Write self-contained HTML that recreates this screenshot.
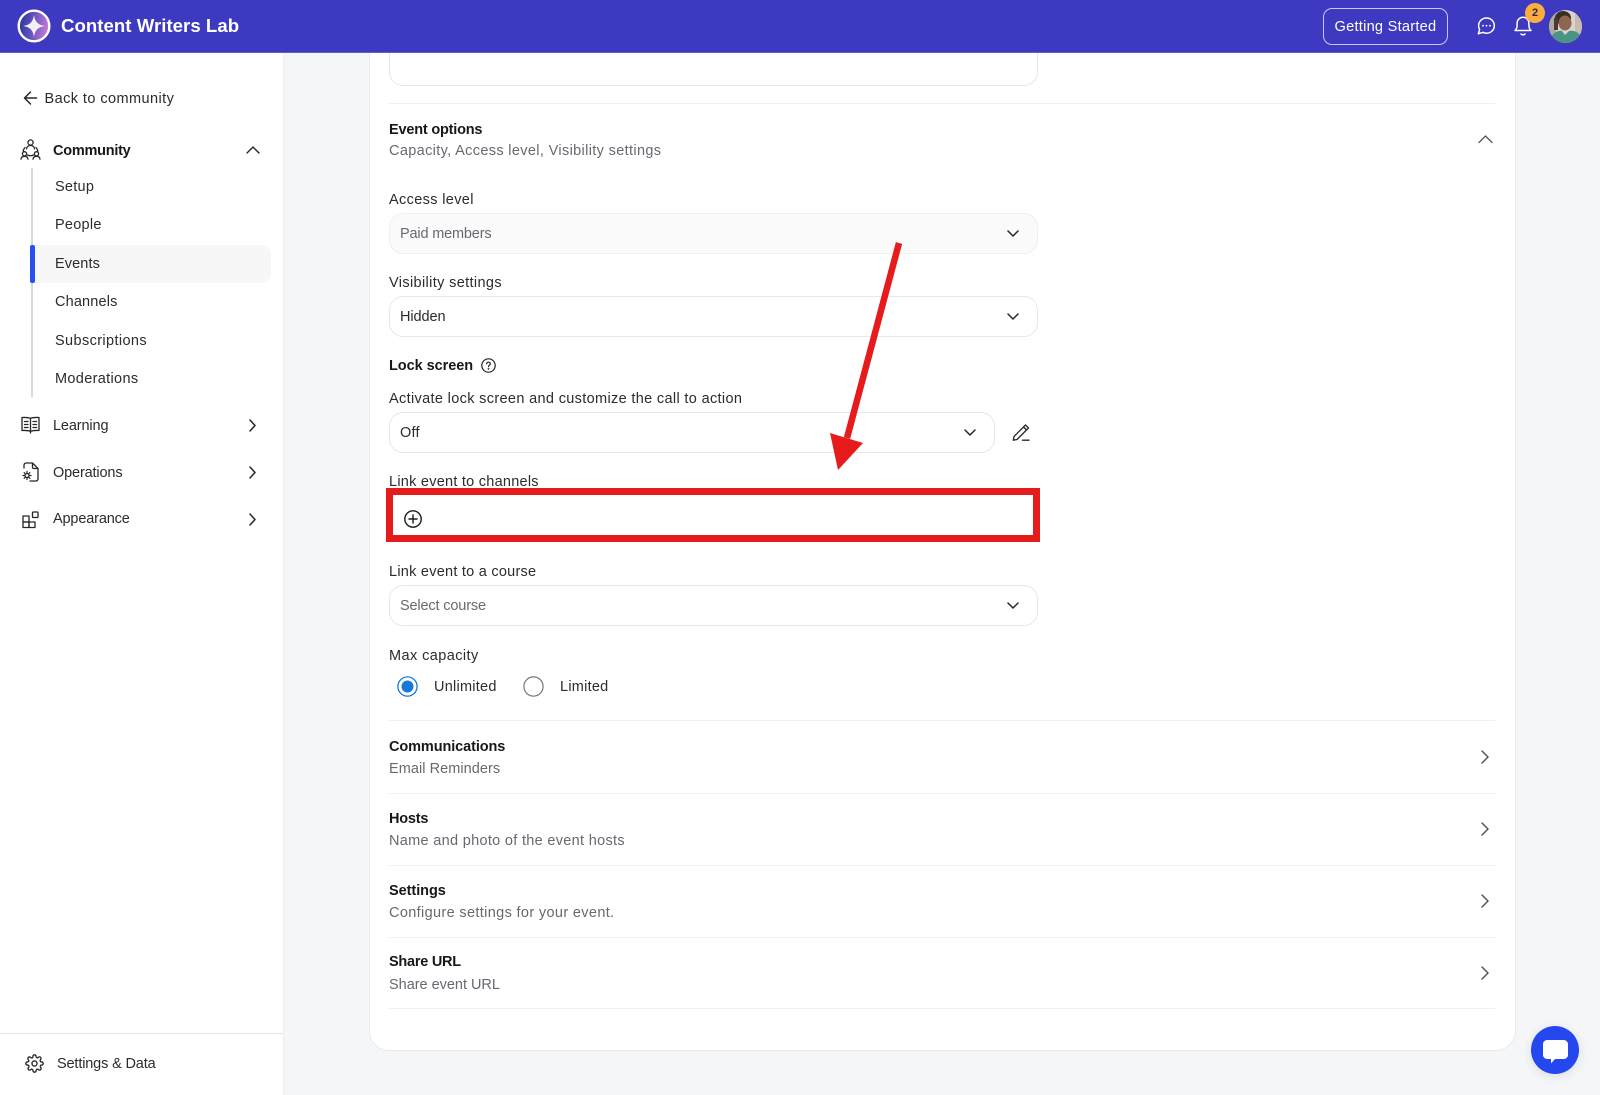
<!DOCTYPE html>
<html lang="en"><head><meta charset="utf-8"><title>Content Writers Lab</title>
<style>
*{box-sizing:border-box}
html,body{margin:0;padding:0;width:1600px;height:1095px;overflow:hidden;background:#f5f6f8;font-family:"Liberation Sans",sans-serif;color:#1f1f24}
.t{position:absolute;white-space:nowrap;transform:translateY(calc(-50% + 1px));font-size:14.5px;line-height:20px;letter-spacing:.25px}
.b{font-weight:700;color:#17171c}
.g{color:#666a70}
.l{color:#2b2b30}
.box{position:absolute;background:#fff;border:1px solid #e6e7ea}
.sel{left:389px;width:649px;border-radius:14px}
.hr{position:absolute;left:389px;width:1106px;height:1px;background:#eeeff1}
svg{position:absolute;overflow:visible}
.ic{fill:none;stroke:#26262b;stroke-width:1.5;stroke-linecap:round;stroke-linejoin:round}
</style></head><body>

<!-- card -->
<div style="position:absolute;left:368.500px;top:20px;width:1147px;height:1031px;background:#fff;border:1px solid #e9eaed;border-radius:20px"></div>
<div class="box" style="left:389px;top:20px;width:649px;height:66px;border-radius:0 0 14px 14px;border-top:none"></div>
<div class="hr" style="top:103px"></div>
<div class="t b" style="left:389px;top:129px;letter-spacing:-.2px">Event options</div>
<div class="t g" style="left:389px;top:149.500px;letter-spacing:.35px">Capacity, Access level, Visibility settings</div>
<svg class="ic" style="left:1478px;top:135px;stroke:#55565a;stroke-width:1.300" width="15" height="8" viewBox="0 0 15 8"><path d="M1 7.500 7.500 1 14 7.500"/></svg>

<div class="t l" style="left:389px;top:199px;letter-spacing:.35px">Access level</div>
<div class="box sel" style="top:213px;height:41px;background:#fafafa;border-color:#eeeff1"></div>
<div class="t g" style="left:400px;top:233px;letter-spacing:-.17px">Paid members</div>
<svg class="ic" style="left:1006.500px;top:229.500px" width="12" height="7" viewBox="0 0 12 7"><path d="M1 1 6 6 11 1"/></svg>

<div class="t l" style="left:389px;top:281.500px;letter-spacing:.36px">Visibility settings</div>
<div class="box sel" style="top:296px;height:41px"></div>
<div class="t l" style="left:400px;top:316px;letter-spacing:-.08px">Hidden</div>
<svg class="ic" style="left:1006.500px;top:312.500px" width="12" height="7" viewBox="0 0 12 7"><path d="M1 1 6 6 11 1"/></svg>

<div class="t b" style="left:389px;top:364.500px;letter-spacing:-.05px">Lock screen</div>
<svg class="ic" style="left:481px;top:358px;stroke-width:1.200" width="15" height="15" viewBox="0 0 15 15"><circle cx="7.500" cy="7.500" r="6.700"/><path d="M5.600 5.800C5.800 4.700 6.600 4.200 7.500 4.200 8.600 4.200 9.400 4.900 9.400 5.800 9.400 7.100 7.500 7.200 7.500 8.600"/><circle cx="7.500" cy="10.800" r=".35"/></svg>
<div class="t l" style="left:389px;top:397.500px;letter-spacing:.34px">Activate lock screen and customize the call to action</div>
<div class="box" style="left:389px;top:412px;width:606px;height:41px;border-radius:14px"></div>
<div class="t l" style="left:400px;top:431.500px">Off</div>
<svg class="ic" style="left:964px;top:429px" width="12" height="7" viewBox="0 0 12 7"><path d="M1 1 6 6 11 1"/></svg>
<svg class="ic" style="left:1012px;top:424px;stroke-width:1.300" width="18" height="17" viewBox="0 0 18 17"><path d="M13.500 1 16.500 4 5 15.500 1.300 16.200 2 12.500ZM11.500 3 14.500 6M10.500 16.200H17"/></svg>

<div class="t l" style="left:389px;top:481px">Link event to channels</div>
<div style="position:absolute;left:386px;top:488px;width:654px;height:54px;border:7px solid #e61b1b;background:#fff"></div>
<svg class="ic" style="left:404px;top:509.500px;stroke:#1b1b20;stroke-width:1.400" width="18" height="18" viewBox="0 0 18 18"><circle cx="9" cy="9" r="8.200"/><path d="M9 5V13M5 9H13"/></svg>

<div class="t l" style="left:389px;top:571px">Link event to a course</div>
<div class="box sel" style="top:585px;height:41px"></div>
<div class="t g" style="left:400px;top:605px;letter-spacing:-.15px">Select course</div>
<svg class="ic" style="left:1006.500px;top:601.500px" width="12" height="7" viewBox="0 0 12 7"><path d="M1 1 6 6 11 1"/></svg>

<div class="t l" style="left:389px;top:654.500px;letter-spacing:.42px">Max capacity</div>
<svg style="left:397px;top:675.500px" width="21" height="21" viewBox="0 0 21 21"><circle cx="10.500" cy="10.500" r="9.600" fill="#fff" stroke="#1678d8" stroke-width="1.300"/><circle cx="10.500" cy="10.500" r="6" fill="#1678d8"/></svg>
<div class="t l" style="left:434px;top:686px">Unlimited</div>
<svg style="left:522.500px;top:675.500px" width="21" height="21" viewBox="0 0 21 21"><circle cx="10.500" cy="10.500" r="9.600" fill="#fff" stroke="#77787c" stroke-width="1.200"/></svg>
<div class="t l" style="left:560px;top:686px">Limited</div>

<div class="hr" style="top:720px"></div>
<div class="t b" style="left:389px;top:746px;letter-spacing:-.1px">Communications</div>
<div class="t g" style="left:389px;top:768px;letter-spacing:.05px">Email Reminders</div>
<svg class="ic" style="left:1481px;top:750px;stroke:#55565a" width="8" height="14" viewBox="0 0 8 14"><path d="M1 1 7 7 1 13"/></svg>
<div class="hr" style="top:793px"></div>
<div class="t b" style="left:389px;top:817.500px;letter-spacing:-.2px">Hosts</div>
<div class="t g" style="left:389px;top:840px;letter-spacing:.31px">Name and photo of the event hosts</div>
<svg class="ic" style="left:1481px;top:822px;stroke:#55565a" width="8" height="14" viewBox="0 0 8 14"><path d="M1 1 7 7 1 13"/></svg>
<div class="hr" style="top:864.500px"></div>
<div class="t b" style="left:389px;top:889.500px;letter-spacing:-.05px">Settings</div>
<div class="t g" style="left:389px;top:912px;letter-spacing:.35px">Configure settings for your event.</div>
<svg class="ic" style="left:1481px;top:894px;stroke:#55565a" width="8" height="14" viewBox="0 0 8 14"><path d="M1 1 7 7 1 13"/></svg>
<div class="hr" style="top:937px"></div>
<div class="t b" style="left:389px;top:961px;letter-spacing:-.25px">Share URL</div>
<div class="t g" style="left:389px;top:983.500px;letter-spacing:-.02px">Share event URL</div>
<svg class="ic" style="left:1481px;top:966px;stroke:#55565a" width="8" height="14" viewBox="0 0 8 14"><path d="M1 1 7 7 1 13"/></svg>
<div class="hr" style="top:1008px"></div>

<!-- top bar -->
<div style="position:absolute;left:0;top:0;width:1600px;height:53px;background:#3d39c0;border-bottom:1px solid #5f5cd0"></div>
<svg style="left:17px;top:9px" width="34" height="34" viewBox="0 0 34 34">
<defs><linearGradient id="lg" x1="0" y1="0" x2="1" y2="0.2"><stop offset="0" stop-color="#22308f"/><stop offset=".5" stop-color="#5f52c0"/><stop offset="1" stop-color="#c477d6"/></linearGradient></defs>
<circle cx="17" cy="17" r="15.300" fill="url(#lg)" stroke="#fff" stroke-width="2.400"/>
<path d="M17 6C18 13 21 16 28 17 21 18 18 21 17 28 16 21 13 18 6 17 13 16 16 13 17 6Z" fill="#f4f0fb"/>
</svg>
<div class="t" style="left:61px;top:25px;font-size:18.600px;font-weight:700;color:#fff;letter-spacing:.04px">Content Writers Lab</div>
<div style="position:absolute;left:1323px;top:8px;width:125px;height:37px;border:1px solid #c9c8f0;border-radius:9px"></div>
<div class="t" style="left:1334.500px;top:25.500px;font-size:14.600px;color:#fff;letter-spacing:.25px">Getting Started</div>
<svg style="left:1477px;top:17px" width="18" height="18" viewBox="0 0 18 18"><path d="M9.500 1C14 1 17.300 4.400 17.300 8.600 17.300 12.900 13.900 16.200 9.600 16.200 8.300 16.200 7.100 15.900 6 15.300L1.300 16.800 2.600 12.600C2 11.400 1.600 10.100 1.600 8.700 1.600 4.400 5 1 9.500 1Z" fill="none" stroke="#fff" stroke-width="1.500" stroke-linejoin="round"/><circle cx="6" cy="8.700" r=".9" fill="#fff"/><circle cx="9.500" cy="8.700" r=".9" fill="#fff"/><circle cx="13" cy="8.700" r=".9" fill="#fff"/></svg>
<svg style="left:1514px;top:16px" width="18" height="20" viewBox="0 0 18 20"><path d="M1 14.500C2.600 13 3.100 11.800 3.100 9.500V7.500C3.100 4 5.700 1.200 9 1.200S14.900 4 14.900 7.500V9.500C14.900 11.800 15.400 13 17 14.500Z" fill="none" stroke="#fff" stroke-width="1.500" stroke-linejoin="round"/><path d="M7 18C8 19.100 10 19.100 11 18" fill="none" stroke="#fff" stroke-width="1.500" stroke-linecap="round"/></svg>
<div style="position:absolute;left:1525px;top:2.500px;width:20px;height:20px;border-radius:50%;background:#fbae3f"></div>
<div class="t" style="left:1532px;top:12px;font-size:11px;font-weight:700;color:#2a2a35;letter-spacing:0">2</div>
<svg style="left:1549px;top:10px" width="33" height="33" viewBox="0 0 33 33">
<defs><clipPath id="av"><circle cx="16.500" cy="16.500" r="16.500"/></clipPath></defs>
<g clip-path="url(#av)"><rect width="33" height="33" fill="#d8d4cf"/><rect width="7" height="33" fill="#b0a99f"/><rect x="26" width="7" height="33" fill="#c9bbae"/>
<ellipse cx="14" cy="8" rx="8" ry="7" fill="#3a2c26"/><rect x="5" y="8" width="4" height="12" fill="#4a3a32"/>
<ellipse cx="16" cy="13" rx="6.500" ry="7.500" fill="#8f6450"/>
<path d="M2 33V27C5 22 10 20 13 21L16 25 20 21C25 20 30 22 33 28V33Z" fill="#4a9484"/></g></svg>

<!-- sidebar -->
<div style="position:absolute;left:0;top:53px;width:284px;height:1042px;background:#fff;border-right:1px solid #eceef0"></div>
<svg class="ic" style="left:23px;top:90px" width="15" height="16" viewBox="0 0 15 16"><path d="M13.500 8H1.500M7.500 2 1.500 8 7.500 14"/></svg>
<div class="t l" style="left:44.500px;top:97.500px;letter-spacing:.43px">Back to community</div>
<svg class="ic" style="left:20px;top:139px;stroke-width:1.300" width="21" height="21" viewBox="0 0 21 21"><circle cx="10.500" cy="3.500" r="2.600"/><path d="M6.500 9.800C6.900 7.600 8.500 6.500 10.500 6.500S14.100 7.600 14.500 9.800M5 8.500C3.700 10 3.200 11 3.200 12.300M16 8.500C17.300 10 17.800 11 17.800 12.300M7.500 16C9.500 17 11.500 17 13.500 16"/><circle cx="4.500" cy="14.800" r="2.100"/><circle cx="16.500" cy="14.800" r="2.100"/><path d="M1 20.200C1.200 18 2.700 17.300 4.500 17.300S7.800 18 8 20.200M13 20.200C13.200 18 14.700 17.300 16.500 17.300S19.800 18 20 20.200"/></svg>
<div class="t b" style="left:53px;top:149.500px;letter-spacing:-.25px">Community</div>
<svg class="ic" style="left:246px;top:146px;stroke-width:1.400" width="14" height="8" viewBox="0 0 14 8"><path d="M1 7 7 1 13 7"/></svg>
<div style="position:absolute;left:31px;top:168px;width:2px;height:229px;background:#d9d9dc"></div>
<div style="position:absolute;left:30px;top:245px;width:241px;height:38px;background:#f7f7f8;border-radius:0 10px 10px 0"></div>
<div style="position:absolute;left:30px;top:245px;width:5px;height:38px;background:#2750ee;border-radius:2px"></div>
<div class="t l" style="left:55px;top:186px">Setup</div>
<div class="t l" style="left:55px;top:224px">People</div>
<div class="t l" style="left:55px;top:263px;letter-spacing:.1px">Events</div>
<div class="t l" style="left:55px;top:300.500px;letter-spacing:.15px">Channels</div>
<div class="t l" style="left:55px;top:339.500px;letter-spacing:.38px">Subscriptions</div>
<div class="t l" style="left:55px;top:377.500px;letter-spacing:.33px">Moderations</div>

<svg class="ic" style="left:21px;top:416px;stroke-width:1.300" width="19" height="18" viewBox="0 0 19 18"><path d="M9.500 2.500C8 1.500 5 1.300 1 1.500V14.500C5 14.300 8 14.500 9.500 15.500 11 14.500 14 14.300 18 14.500V1.500C14 1.300 11 1.500 9.500 2.500ZM9.500 2.500V17M3.500 5.500H7M3.500 8.500H7M3.500 11.500H7M12 5.500H15.500M12 8.500H15.500M12 11.500H15.500"/></svg>
<div class="t l" style="left:53px;top:425px;letter-spacing:-.13px">Learning</div>
<svg class="ic" style="left:249px;top:419px;stroke-width:1.500" width="7" height="13" viewBox="0 0 7 13"><path d="M1 1 6 6.500 1 12"/></svg>
<svg class="ic" style="left:22px;top:462px;stroke-width:1.300" width="17" height="20" viewBox="0 0 17 20"><path d="M2 6V3C2 2 3 1 4 1H10.500L16 6.500V17C16 18 15 19 14 19H8M10.500 1V5.500C10.500 6 11 6.500 11.500 6.500H16"/><circle cx="5" cy="13.500" r="2"/><path d="M5 9.500V10.500M5 16.500V17.500M1 13.500H2M8 13.500H9M2.200 10.700 2.900 11.400M7.100 15.600 7.800 16.300M2.200 16.300 2.900 15.600M7.100 11.400 7.800 10.700"/></svg>
<div class="t l" style="left:53px;top:472px;letter-spacing:-.15px">Operations</div>
<svg class="ic" style="left:249px;top:466px;stroke-width:1.500" width="7" height="13" viewBox="0 0 7 13"><path d="M1 1 6 6.500 1 12"/></svg>
<svg class="ic" style="left:22px;top:511px;stroke-width:1.300" width="17" height="17" viewBox="0 0 17 17"><rect x="1" y="5" width="6" height="6"/><rect x="1" y="11" width="6" height="5.500"/><rect x="7" y="11" width="6" height="5.500"/><rect x="10.500" y="1" width="5.500" height="5.500" rx=".8"/></svg>
<div class="t l" style="left:53px;top:518px;letter-spacing:-.15px">Appearance</div>
<svg class="ic" style="left:249px;top:512.500px;stroke-width:1.500" width="7" height="13" viewBox="0 0 7 13"><path d="M1 1 6 6.500 1 12"/></svg>

<div style="position:absolute;left:0;top:1033px;width:283px;height:1px;background:#e4e5e7"></div>
<svg class="ic" style="left:25px;top:1054px;stroke-width:1.700" width="19" height="19" viewBox="0 0 24 24"><circle cx="12" cy="12" r="3.200"/><path d="M19.400 15a1.650 1.650 0 0 0 .33 1.820l.06.06a2 2 0 1 1-2.830 2.830l-.06-.06a1.650 1.650 0 0 0-2.820 1.170V21a2 2 0 1 1-4 0v-.09A1.650 1.650 0 0 0 7.260 19.730l-.06.06a2 2 0 1 1-2.830-2.830l.06-.06A1.650 1.650 0 0 0 3.260 14H3a2 2 0 1 1 0-4h.09a1.650 1.650 0 0 0 1.180-2.800l-.06-.06a2 2 0 1 1 2.830-2.830l.06.06A1.650 1.650 0 0 0 10 3.260V3a2 2 0 1 1 4 0v.09a1.650 1.650 0 0 0 2.800 1.180l.06-.06a2 2 0 1 1 2.830 2.830l-.06.06A1.650 1.650 0 0 0 20.740 10H21a2 2 0 1 1 0 4h-.09a1.650 1.650 0 0 0-1.510 1Z"/></svg>
<div class="t l" style="left:57px;top:1063px;letter-spacing:-.15px">Settings &amp; Data</div>

<!-- red annotation arrow -->
<svg style="left:0;top:0" width="1600" height="1095" viewBox="0 0 1600 1095">
<path d="M899 243 847 438" stroke="#e61b1b" stroke-width="6.500" fill="none"/>
<path d="M830 433 863 443 838 470Z" fill="#e61b1b"/>
</svg>

<!-- chat launcher -->
<div style="position:absolute;left:1531px;top:1026px;width:48px;height:48px;border-radius:50%;background:#2447f0;box-shadow:0 2px 10px rgba(30,40,90,.12)"></div>
<svg style="left:1543px;top:1040px" width="25" height="24" viewBox="0 0 25 24"><path d="M4 0H21C23 0 25 2 25 4V15C25 17 23 19 21 19H12L8 23.500V19H4C2 19 0 17 0 15V4C0 2 2 0 4 0Z" fill="#fff"/></svg>
</body></html>
